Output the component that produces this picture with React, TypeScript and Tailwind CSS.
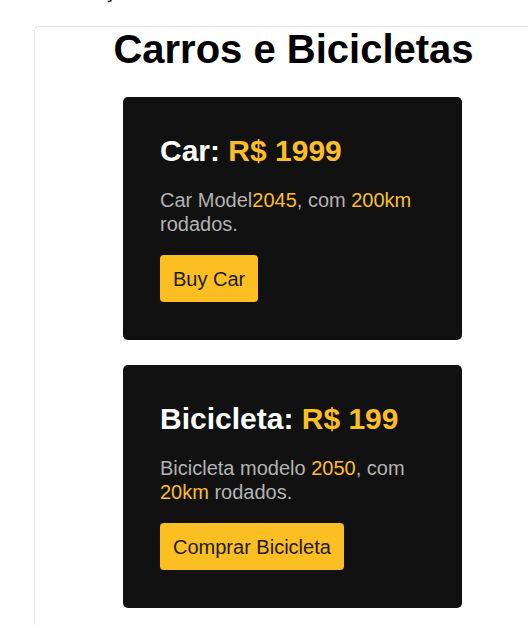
export default function App() {
  const font = { fontFamily: '"Liberation Sans", Arial, Helvetica, sans-serif' };
  return (
    <div className="min-h-[625px] bg-white overflow-hidden" style={font}>
      <div className="h-[26px] relative overflow-hidden">
        <span className="absolute left-[104px] top-[-24px] text-[20px] font-bold text-black">ção</span>
      </div>
      <div className="ml-[34px] w-[520px] border-l border-t border-[#e6e6e6] rounded-tl-[5px] min-h-[620px] flex flex-col items-center">
        <h1 className="text-[40px] font-bold leading-[45px] text-black -ml-[2px]">Carros e Bicicletas</h1>
        <div className="mt-[25px] flex flex-col gap-[25px] -ml-[4px]">
          <Card
            title="Car:"
            price="R$ 1999"
            desc={<>Car Model<span className="text-[#fbbf24]">2045</span>, com <span className="text-[#fbbf24]">200km</span> rodados.</>}
            button="Buy Car"
          />
          <Card
            title="Bicicleta:"
            price="R$ 199"
            desc={<>Bicicleta modelo <span className="text-[#fbbf24]">2050</span>, com <span className="text-[#fbbf24]">20km</span> rodados.</>}
            button="Comprar Bicicleta"
          />
        </div>
      </div>
    </div>
  );
}

function Card({ title, price, desc, button }: { title: string; price: string; desc: React.ReactNode; button: string }) {
  return (
    <div className="w-[339px] h-[243px] bg-[#111111] rounded-[5px] pl-[37px] pr-[37px] pt-[36px] flex flex-col items-start">
      <h2 className="text-[30px] font-bold leading-[36px] text-white">
        {title} <span className="text-[#fbbf24]">{price}</span>
      </h2>
      <p className="mt-[19px] text-[20px] leading-[24px] text-[#b3b3b3]">{desc}</p>
      <button className="mt-[19px] h-[47px] px-[13px] rounded-[4px] bg-[#fbbf24] text-[20px] text-[#1f1a10]">{button}</button>
    </div>
  );
}
